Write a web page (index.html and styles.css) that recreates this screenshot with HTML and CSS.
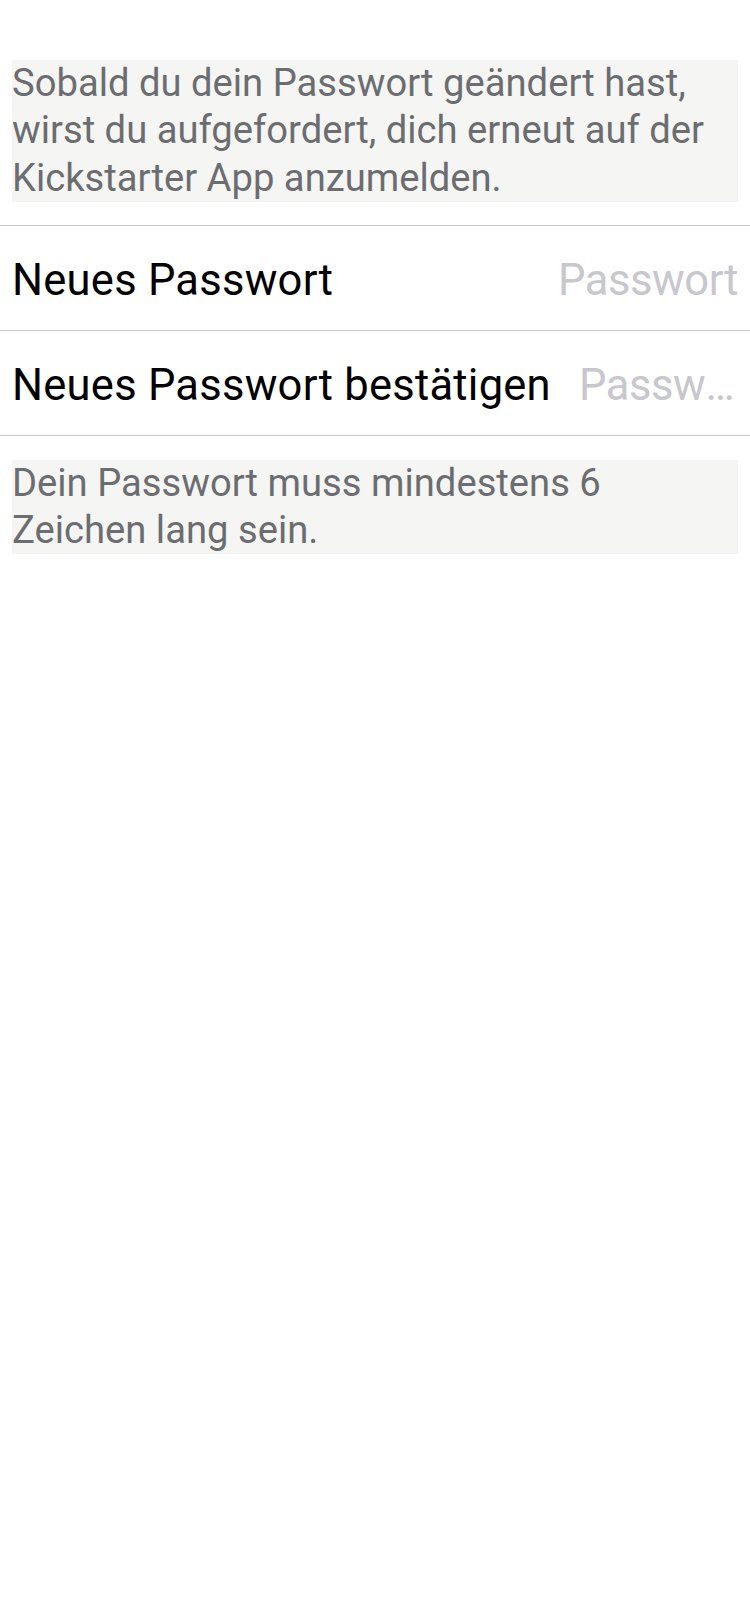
FILE: index.html
```html
<!DOCTYPE html>
<html lang="de">
<head>
<meta charset="utf-8">
<title>Passwort ändern</title>
<link rel="stylesheet" href="styles.css">
</head>
<body>
<main class="screen">
  <p class="note note-top">Sobald du dein Passwort geändert hast, wirst du aufgefordert, dich erneut auf der Kickstarter App anzumelden.</p>
  <section class="group">
    <div class="row">
      <span class="label">Neues Passwort</span>
      <span class="field">Passwort</span>
    </div>
    <div class="row">
      <span class="label">Neues Passwort bestätigen</span>
      <span class="field">Passwort</span>
    </div>
  </section>
  <p class="note note-bottom">Dein Passwort muss mindestens 6 Zeichen lang sein.</p>
</main>
</body>
</html>
```
FILE: styles.css
```css
html, body {
  margin: 0;
  padding: 0;
  background: #ffffff;
}
.screen {
  width: 750px;
  min-height: 1624px;
  font-family: Roboto, "Liberation Sans", Arial, sans-serif;
  background: #ffffff;
  padding-top: 60px;
  box-sizing: border-box;
}
.note {
  margin: 0 12px;
  background: #f5f5f4;
  color: #6b6d70;
  font-size: 38.2px;
  line-height: 47.3px;
}
.note-top {
  margin-bottom: 23px;
}
.note-bottom {
  margin-top: 24px;
}
.group {
  border-top: 1px solid #c8c7cc;
}
.row {
  display: flex;
  align-items: center;
  height: 99px;
  padding: 5px 12px 0;
  border-bottom: 1px solid #c8c7cc;
  font-size: 43.5px;
}
.label {
  flex: none;
  color: #000000;
  letter-spacing: 0.25px;
  white-space: nowrap;
}
.field {
  flex: 1;
  min-width: 0;
  margin-left: 28px;
  text-align: right;
  color: #c7c7cd;
  letter-spacing: -0.4px;
  white-space: nowrap;
  overflow: hidden;
  text-overflow: ellipsis;
}
```
